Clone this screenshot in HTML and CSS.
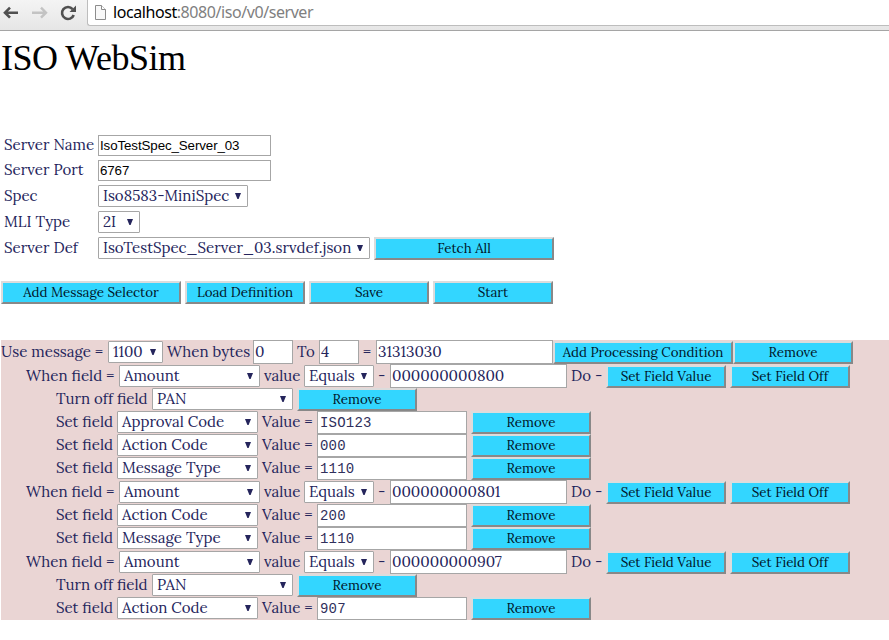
FILE: index.html
```html
<!DOCTYPE html>
<html lang="en">
<head>
<meta charset="utf-8">
<title>ISO WebSim</title>
<link rel="stylesheet" href="styles.css">
</head>
<body>
<header class="toolbar">
  <svg class="nav" width="88" height="30" viewBox="0 0 88 30" fill="none">
    <path d="M18 12.700H5M10 7.700l-5 5 5 5" stroke="#505050" stroke-width="2.600"/>
    <path d="M32 12.700h13M41 7.700l5 5-5 5" stroke="#c3c3c3" stroke-width="2.400"/>
    <path d="M72.600 9.100A6 6 0 1 0 73.700 15" stroke="#505050" stroke-width="2.600"/>
    <path d="M76 5.500v6.500h-6.500z" fill="#505050"/>
  </svg>
  <div class="address">
    <svg width="13" height="16" viewBox="0 0 13 16"><path d="M1.500 .500h6l4 4v10h-10z" fill="#f8f8f8" stroke="#8c8c8c"/><path d="M7.500 .500v4h4" fill="#fff" stroke="#8c8c8c"/></svg>
    <span class="url">localhost<span class="path">:8080/iso/v0/server</span></span>
  </div>
</header>
<main>
  <h1>ISO WebSim</h1>
  <section class="settings">
    <div class="setting"><span>Server Name</span><span class="field plain">IsoTestSpec_Server_03</span></div>
    <div class="setting"><span>Server Port</span><span class="field plain">6767</span></div>
    <div class="setting"><span>Spec</span><span class="select spec">Iso8583-MiniSpec</span></div>
    <div class="setting"><span>MLI Type</span><span class="select mli">2I</span></div>
    <div class="setting"><span>Server Def</span><span class="select def">IsoTestSpec_Server_03.srvdef.json</span><button class="wide">Fetch All</button></div>
  </section>
  <div class="actions"><button class="wide">Add Message Selector</button><button>Load Definition</button><button>Save</button><button>Start</button></div>
  <section class="rules">
    <div class="rule message"><span>Use message =</span><span class="select">1100</span><span>When bytes</span><span class="field">0</span><span>To</span><span class="field">4</span><span>=</span><span class="field bytes">31313030</span><button class="wide">Add Processing Condition</button><button>Remove</button></div>

    <div class="rule when"><span>When field =</span><span class="select">Amount</span><span>value</span><span class="select">Equals</span><span>-</span><span class="field">000000000800</span><span>Do -</span><button>Set Field Value</button><button>Set Field Off</button></div>
    <div class="rule off"><span>Turn off field</span><span class="select">PAN</span><button>Remove</button></div>
    <div class="rule set"><span>Set field</span><span class="select">Approval Code</span><span>Value =</span><span class="field mono">ISO123</span><button>Remove</button></div>
    <div class="rule set"><span>Set field</span><span class="select">Action Code</span><span>Value =</span><span class="field mono">000</span><button>Remove</button></div>
    <div class="rule set"><span>Set field</span><span class="select">Message Type</span><span>Value =</span><span class="field mono">1110</span><button>Remove</button></div>

    <div class="rule when"><span>When field =</span><span class="select">Amount</span><span>value</span><span class="select">Equals</span><span>-</span><span class="field">000000000801</span><span>Do -</span><button>Set Field Value</button><button>Set Field Off</button></div>
    <div class="rule set"><span>Set field</span><span class="select">Action Code</span><span>Value =</span><span class="field mono">200</span><button>Remove</button></div>
    <div class="rule set"><span>Set field</span><span class="select">Message Type</span><span>Value =</span><span class="field mono">1110</span><button>Remove</button></div>

    <div class="rule when"><span>When field =</span><span class="select">Amount</span><span>value</span><span class="select">Equals</span><span>-</span><span class="field">000000000907</span><span>Do -</span><button>Set Field Value</button><button>Set Field Off</button></div>
    <div class="rule off"><span>Turn off field</span><span class="select">PAN</span><button>Remove</button></div>
    <div class="rule set"><span>Set field</span><span class="select">Action Code</span><span>Value =</span><span class="field mono">907</span><button>Remove</button></div>
  </section>
</main>
</body>
</html>
```
FILE: styles.css
```css
* { box-sizing: border-box; }
body {
  margin: 0;
  height: 640px;
  overflow: hidden;
  background: #fff;
  color: #25255c;
  font: 15.05px/22px Lora, "Liberation Serif", serif;
  white-space: nowrap;
}

/* browser bar */
.toolbar {
  display: flex;
  height: 31px;
  background: linear-gradient(#f4f4f4, #e6e6e6);
  border-bottom: 1px solid #a5a5a5;
}
.nav { flex: none; }
.address {
  display: flex;
  flex: 1;
  height: 26px;
  margin-left: -1px;
  padding: 5px 0 0 6px;
  background: #fff;
  border: solid #bdbdbd;
  border-width: 0 0 1px 1px;
  border-radius: 0 0 0 3px;
}
.url {
  margin: -3px 0 0 6px;
  color: #000;
  font: 16px/20px "Noto Sans", sans-serif;
  letter-spacing: -0.43px;
}
.path { color: #808080; }

h1 {
  height: 104px;
  margin: 0;
  padding-left: 1px;
  color: #000;
  font: 36px/55px "Liberation Serif", serif;
  letter-spacing: -0.5px;
}

/* server settings */
.settings { display: grid; grid-template-rows: 25px 25px 26px 26px 23px; padding-left: 4px; }
.setting { display: grid; grid-template-columns: 94px auto auto 1fr; align-items: start; }
.setting > span:first-child { line-height: 22px; }
.setting:nth-child(-n+2) > span:first-child { line-height: 20px; }
.setting button { margin-left: 4px; }
.plain { width: 173px; }
.spec { width: 150px; }
.mli { width: 42px; }
.def { width: 272px; }

.field, .select {
  background: #fff;
  border: 1px solid #a6a6a6;
}
.field { height: 24px; padding-left: 1px; font-size: 15.2px; }
.rule > .field { line-height: 22px; }
.field.plain {
  height: 21px;
  padding-left: 1px;
  color: #000;
  font: 13.33px/19px "Liberation Sans", sans-serif;
  letter-spacing: -0.1px;
}
.select {
  display: flex;
  align-items: center;
  justify-content: space-between;
  height: 22px;
  padding: 0 6px 0 4px;
  border-radius: 1px;
  line-height: 20px;
}
.select::after {
  content: "";
  width: 6px;
  height: 6px;
  background: #25255c;
  clip-path: polygon(0 0, 100% 0, 60% 100%, 40% 100%);
}

button {
  width: 120px;
  height: 23px;
  padding: 0;
  border: 2px solid;
  border-color: #dcdcdc #888 #888 #dcdcdc;
  background: #33d6ff;
  color: #001428;
  font: 13.33px/19px Lora, "Liberation Serif", serif;
}
button.wide { width: 180px; }

.actions { display: flex; gap: 4px; padding: 21px 0 36px 1px; }

/* message rules */
.rules { margin-left: 1px; background: #ead5d4; }
.rule { display: grid; height: 23px; align-items: start; }
.rule button { align-self: end; }
.message, .when { height: 24px; }
.message .select, .when .select { margin-top: 1px; line-height: 20px; }
.message > span:not(.select), .when > span:not(.select) { line-height: 23px; }
.message > .field:not(.select), .when > .field:not(.select) { line-height: 22px; }
.message { grid-template-columns: 107px 55px 90px 40px 26px 40px 17px 177px 180px 120px; }
.when { grid-template-columns: 93px 141px 44px 70px 16px 177px 39px 120px 124px; padding-left: 25px; }
.off { grid-template-columns: 96px 141px 124px; padding-left: 55px; }
.set { grid-template-columns: 61px 141px 59px 150px 124px; padding-left: 55px; }
.when button:last-child { margin-left: 4px; }
.off button, .set button { margin-left: 4px; }
.message > span:nth-child(3), .message > span:nth-child(5), .message > span:nth-child(7),
.when > span:nth-child(3), .when > span:nth-child(5), .when > span:nth-child(7),
.set > span:nth-child(3) { padding-left: 4px; }
.rule > .field.mono {
  height: 23px;
  padding-left: 2px;
  color: #30305c;
  font: 14px/23px "Liberation Mono", monospace;
  letter-spacing: 0.2px;
}
```
